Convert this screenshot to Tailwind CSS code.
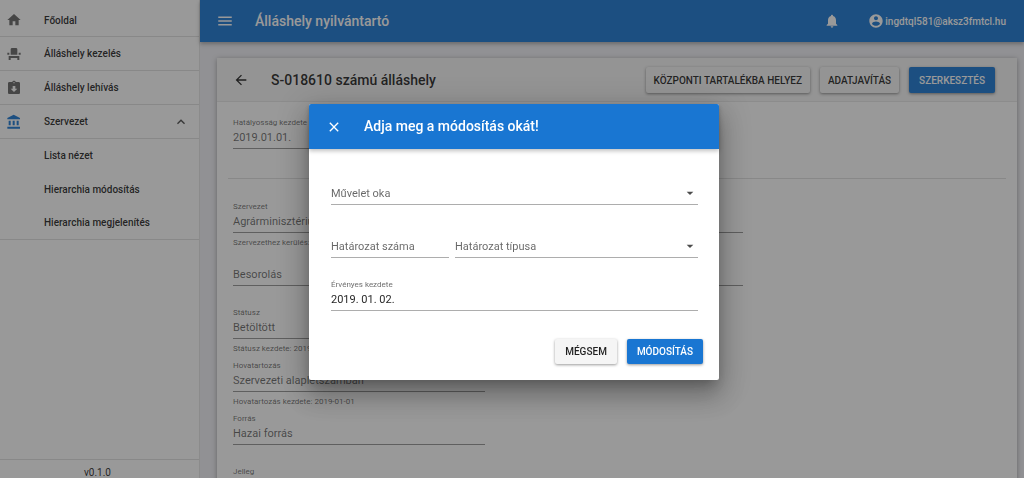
<!DOCTYPE html>
<html lang="hu">
<head>
<meta charset="utf-8">
<meta name="viewport" content="width=device-width, initial-scale=1">
<title>Álláshely nyilvántartó</title>
<script src="https://cdn.jsdelivr.net/npm/@tailwindcss/browser@4"></script>
</head>
<body class="h-screen overflow-hidden bg-[#f0f0f5] font-['Roboto','Liberation_Sans',sans-serif] text-[11px] text-black/87">
<div class="flex h-full">
  <aside class="flex w-[200px] shrink-0 flex-col border-r border-black/10 bg-white text-[10px] font-medium">
    <nav aria-label="Főmenü" class="border-b border-black/12">
      <a href="#" class="flex h-[37px] items-center border-b border-black/12 pt-1 pl-[6px]">
        <svg class="size-4 fill-black/60" viewBox="0 0 24 24"><path d="M10 20v-6h4v6h5v-8h3L12 3 2 12h3v8z"/></svg>
        <span class="ml-[22px]">Főoldal</span>
      </a>
      <a href="#" class="flex h-[34px] items-center border-b border-black/12 pl-[6px]">
        <svg class="size-4 fill-black/60" viewBox="0 0 24 24"><path d="M4 18v3h3v-3h10v3h3v-6H4v3zm15-8h3v3h-3v-3zM2 10h3v3H2v-3zm15 3H7V5c0-1.100.9-2 2-2h6c1.100 0 2 .9 2 2v8z"/></svg>
        <span class="ml-[22px]">Álláshely kezelés</span>
      </a>
      <a href="#" class="flex h-[34px] items-center border-b border-black/12 pl-[6px]">
        <svg class="size-4 fill-black/60" viewBox="0 0 24 24"><path d="M19 3h-4.180C14.400 1.840 13.300 1 12 1c-1.300 0-2.400.84-2.820 2H5c-1.100 0-2 .9-2 2v14c0 1.100.9 2 2 2h14c1.100 0 2-.9 2-2V5c0-1.100-.9-2-2-2zm-7 0c.55 0 1 .45 1 1s-.45 1-1 1-1-.45-1-1 .45-1 1-1zm0 15l-5-5h3V9h4v4h3l-5 5z"/></svg>
        <span class="ml-[22px]">Álláshely lehívás</span>
      </a>
      <a href="#" class="flex h-[34px] items-center border-b border-black/12 pl-[6px]">
        <svg class="size-4 fill-[#1976d2]" viewBox="0 0 24 24"><path d="M4 10v7h3v-7H4zm6 0v7h3v-7h-3zM2 22h19v-3H2v3zm14-12v7h3v-7h-3zm-4.500-9L2 6v2h19V6l-9.500-5z"/></svg>
        <span class="ml-[22px]">Szervezet</span>
        <svg class="mr-[10px] ml-auto size-4 fill-black/70" viewBox="0 0 24 24"><path d="M7.410 15.410L12 10.830l4.590 4.580L18 14l-6-6-6 6z"/></svg>
      </a>
      <a href="#" class="flex h-[33px] items-center pl-11">Lista nézet</a>
      <a href="#" class="flex h-[34px] items-center pl-11">Hierarchia módosítás</a>
      <a href="#" class="flex h-[33px] items-center pl-11">Hierarchia megjelenítés</a>
    </nav>
    <p class="mt-auto h-[19px] border-t border-black/12 pt-[5px] pr-1 text-center leading-4 font-normal">v0.1.0</p>
  </aside>

  <div class="flex min-w-0 flex-1 flex-col">
    <header class="z-10 flex h-[42px] shrink-0 items-center bg-[#1976d2] pr-[18px] pl-4 text-white shadow-[0_2px_4px_rgba(0,0,0,0.3)]">
      <button type="button" aria-label="Menü"><svg class="size-[18px] fill-white" viewBox="0 0 24 24"><path d="M3 18h18v-2H3v2zm0-5h18v-2H3v2zm0-7v2h18V6H3z"/></svg></button>
      <h1 class="ml-[21px] text-[14px] font-medium">Álláshely nyilvántartó</h1>
      <button type="button" aria-label="Értesítések" class="ml-auto"><svg class="size-4 fill-white" viewBox="0 0 24 24"><path d="M12 22c1.100 0 2-.9 2-2h-4c0 1.100.89 2 2 2zm6-6v-5c0-3.070-1.640-5.640-4.500-6.320V4c0-.83-.67-1.500-1.500-1.500s-1.500.67-1.500 1.500v.68C7.630 5.360 6 7.920 6 11v5l-2 2v1h16v-1l-2-2z"/></svg></button>
      <a href="#" class="ml-7 flex items-center gap-px text-[10px] font-medium"><svg class="size-4 fill-white" viewBox="0 0 24 24"><path d="M12 2C6.480 2 2 6.480 2 12s4.480 10 10 10 10-4.480 10-10S17.520 2 12 2zm0 3c1.660 0 3 1.340 3 3s-1.340 3-3 3-3-1.340-3-3 1.340-3 3-3zm0 14.200c-2.500 0-4.710-1.280-6-3.220.03-1.990 4-3.080 6-3.080 1.990 0 5.970 1.090 6 3.080-1.290 1.940-3.500 3.220-6 3.220z"/></svg>ingdtql581@aksz3fmtcl.hu</a>
    </header>

    <main class="min-h-0 flex-1 overflow-hidden pt-4 pr-[7px] pl-[17px]">
      <section class="min-h-full bg-white shadow-[0_1px_5px_rgba(0,0,0,0.35)]">
        <div class="flex h-11 items-center border-b border-black/5 bg-[#f5f5f5] pt-px pr-[22px] pl-4">
          <button type="button" aria-label="Vissza"><svg class="size-4 fill-black/87" viewBox="0 0 24 24"><path d="M20 11H7.830l5.590-5.590L12 4l-8 8 8 8 1.410-1.410L7.830 13H20v-2z"/></svg></button>
          <h2 class="mr-auto ml-[22px] text-[14px] font-medium">S-018610 számú álláshely</h2>
          <div class="flex gap-[10px] text-[10px] font-medium">
            <button type="button" class="h-[26px] rounded-xs bg-[#f5f5f5] px-2 shadow-[0_1px_3px_rgba(0,0,0,0.45)]">KÖZPONTI TARTALÉKBA HELYEZ</button>
            <button type="button" class="h-[26px] rounded-xs bg-[#f5f5f5] px-2 shadow-[0_1px_3px_rgba(0,0,0,0.45)]">ADATJAVÍTÁS</button>
            <button type="button" class="h-[26px] rounded-xs bg-[#1976d2] px-[10px] text-white shadow-[0_1px_3px_rgba(0,0,0,0.45)]">SZERKESZTÉS</button>
          </div>
        </div>
        <form class="px-[11px] pt-[14px] text-black/60">
          <div class="flex h-[62px] w-[262px] flex-col px-[5px]">
            <label for="f1" class="text-[8px] leading-[14px]">Hatályosság kezdete</label>
            <input id="f1" value="2019.01.01." class="h-[19px] border-b border-black/42 pb-[3px]">
          </div>
          <hr class="border-black/12">
          <div class="mt-[21px] grid w-[520px] auto-rows-[53px] grid-cols-1 px-[5px]">
            <div class="flex flex-col">
              <label for="f2" class="text-[8px] leading-[14px]">Szervezet</label>
              <input id="f2" value="Agrárminisztérium" class="h-[19px] border-b border-black/42 pb-[3px]">
              <p class="mt-1 text-[8px] leading-3">Szervezethez kerülés: 2019-01-01</p>
            </div>
            <div class="flex flex-col pt-[14px]">
              <input aria-label="Besorolás" placeholder="Besorolás" class="h-[19px] border-b border-black/42 pb-[3px] placeholder:text-black/60">
            </div>
            <div class="flex w-[252px] flex-col">
              <label for="f3" class="text-[8px] leading-[14px]">Státusz</label>
              <input id="f3" value="Betöltött" class="h-[19px] border-b border-black/42 pb-[3px]">
              <p class="mt-1 text-[8px] leading-3">Státusz kezdete: 2019-01-01</p>
            </div>
            <div class="flex w-[252px] flex-col">
              <label for="f4" class="text-[8px] leading-[14px]">Hovatartozás</label>
              <input id="f4" value="Szervezeti alaplétszámban" class="h-[19px] border-b border-black/42 pb-[3px]">
              <p class="mt-1 text-[8px] leading-3">Hovatartozás kezdete: 2019-01-01</p>
            </div>
            <div class="flex w-[252px] flex-col">
              <label for="f5" class="text-[8px] leading-[14px]">Forrás</label>
              <input id="f5" value="Hazai forrás" class="h-[19px] border-b border-black/42 pb-[3px]">
            </div>
            <div class="flex w-[252px] flex-col">
              <label for="f6" class="text-[8px] leading-[14px]">Jelleg</label>
              <input id="f6" class="h-[19px] border-b border-black/42 pb-[3px]">
            </div>
          </div>
        </form>
      </section>
    </main>
  </div>
</div>

<div class="fixed inset-0 z-20 flex items-center justify-center bg-[#212121]/46 pt-1.5 pl-1">
  <div role="dialog" aria-modal="true" aria-labelledby="dlg" class="w-[410px] rounded-xs bg-white shadow-[0_7px_10px_-4px_rgba(0,0,0,0.2),0_16px_25px_2px_rgba(0,0,0,0.2),0_6px_30px_5px_rgba(0,0,0,0.16)]">
    <div class="flex h-[45px] items-center rounded-t-xs bg-[#1976d2] pl-[17px] text-white shadow-[0_2px_4px_rgba(0,0,0,0.25)]">
      <button type="button" aria-label="Bezárás"><svg class="size-4 fill-white" viewBox="0 0 24 24"><path d="M19 6.410L17.590 5 12 10.590 6.410 5 5 6.410 10.590 12 5 17.590 6.410 19 12 13.410 17.590 19 19 17.590 13.410 12z"/></svg></button>
      <h2 id="dlg" class="ml-[22px] text-[14px] font-medium">Adja meg a módosítás okát!</h2>
    </div>
    <form class="pt-[34px] pr-[21px] pl-[22px] text-black/87">
      <div class="relative">
        <select aria-label="Művelet oka" class="h-[22px] w-full appearance-none border-b border-black/32 pt-px text-black/60"><option>Művelet oka</option></select>
        <svg class="pointer-events-none absolute top-[2px] right-0 size-4 fill-black/70" viewBox="0 0 24 24"><path d="M7 10l5 5 5-5z"/></svg>
      </div>
      <div class="mt-[31px] flex gap-1.5">
        <input aria-label="Határozat száma" placeholder="Határozat száma" class="h-[22px] w-[118px] border-b border-black/32 pb-px placeholder:text-black/60">
        <div class="relative flex-1">
          <select aria-label="Határozat típusa" class="h-[22px] w-full appearance-none border-b border-black/32 pt-px text-black/60"><option>Határozat típusa</option></select>
          <svg class="pointer-events-none absolute top-[2px] right-0 size-4 fill-black/70" viewBox="0 0 24 24"><path d="M7 10l5 5 5-5z"/></svg>
        </div>
      </div>
      <div class="mt-5 flex flex-col">
        <label for="kezdet" class="text-[8px] leading-[14px] text-black/60">Érvényes kezdete</label>
        <input id="kezdet" value="2019. 01. 02." class="h-[19px] border-b border-black/32 pb-[3px]">
      </div>
    </form>
    <div class="flex justify-end gap-[10px] pt-7 pr-4 pb-4 text-[10px] font-medium">
      <button type="button" class="h-[25px] rounded-xs bg-[#f5f5f5] px-[10px] shadow-[0_1px_3px_rgba(0,0,0,0.4)]">MÉGSEM</button>
      <button type="button" class="h-[25px] rounded-xs bg-[#1976d2] px-[10px] text-white shadow-[0_1px_3px_rgba(0,0,0,0.4)]">MÓDOSÍTÁS</button>
    </div>
  </div>
</div>
</body>
</html>
